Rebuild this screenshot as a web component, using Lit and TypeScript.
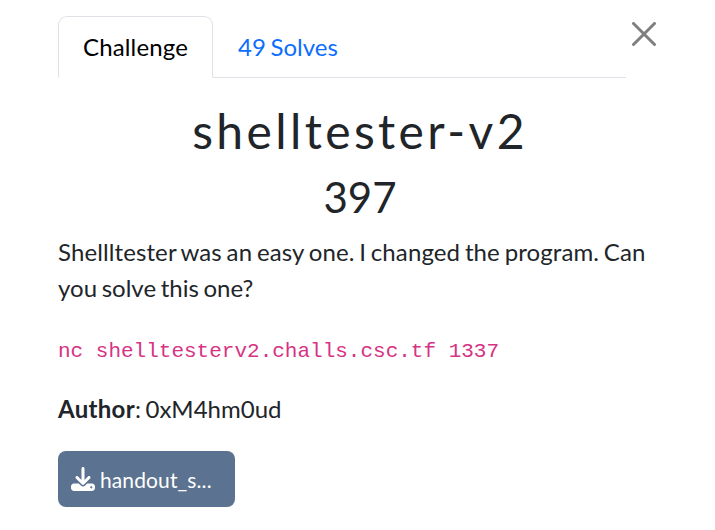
import { LitElement, html, css } from "lit";
import { customElement, property } from "lit/decorators.js";

@customElement("app-root")
export class AppRoot extends LitElement {
  @property() name = "shelltester-v2";
  @property({ type: Number }) value = 397;
  @property({ type: Number }) solves = 49;

  static styles = css`
    :host {
      display: block;
      box-sizing: border-box;
      height: 530px;
      overflow: hidden;
      padding: 16px 53px 0 58px;
      background: #fff;
      color: #212529;
      font: 400 24px/36px Lato, sans-serif;
      letter-spacing: 0.11px;
      word-spacing: -1.5px;
    }
    .head { display: flex; height: 62px; }
    .tabs {
      display: flex;
      flex: 0 0 568px;
      box-sizing: border-box;
      border-bottom: 1px solid #dee2e6;
    }
    .tab {
      box-sizing: border-box;
      height: 62px;
      padding: 12px 24px;
      border: 1px solid transparent;
      color: #0d6efd;
      letter-spacing: 0;
      white-space: nowrap;
    }
    .tab.active {
      color: #000;
      background: #fff;
      border-color: #dee2e6 #dee2e6 #fff;
      border-radius: 9px 9px 0 0;
      letter-spacing: 0.15px;
    }
    .close { display: block; width: 24px; height: 24px; margin: 6px 0 0 6px; flex: none; }
    h2, h3, p { margin: 0; font-weight: 400; }
    h2 {
      margin-top: 24px;
      text-align: center;
      font-size: 48px;
      line-height: 58px;
      letter-spacing: 3.4px;
    }
    h3 { margin-top: 12px; text-align: center; font-size: 42px; line-height: 50px; letter-spacing: 0; }
    .desc { margin-top: 12px; white-space: nowrap; }
    .last { letter-spacing: 0; }
    .row { margin-top: 24px; height: 36px; }
    code {
      font: 21px/36px "Liberation Mono", monospace;
      letter-spacing: 0;
      word-spacing: 0;
      color: #d63384;
    }
    .author { margin-top: 25px; letter-spacing: 0; }
    b { font-weight: 700; letter-spacing: 0.3px; }
    .file {
      display: flex;
      align-items: center;
      box-sizing: border-box;
      width: 177px;
      height: 56px;
      margin-top: 24px;
      padding: 0 13px;
      border-radius: 8px;
      background: #5b7290;
      color: #fff;
      font-size: 21px;
      gap: 5px;
    }
    .file svg { flex: none; width: 24px; height: 24px; }
    .file span { padding-top: 2px; }
  `;

  render() {
    return html`
      <div class="head">
        <div class="tabs">
          <div class="tab active">Challenge</div>
          <div class="tab">${this.solves} Solves</div>
        </div>
        <svg class="close" viewBox="0 0 24 24" fill="none" stroke="#7f7f7f" stroke-width="3" stroke-linecap="round">
          <path d="M1.5 1.5 22.5 22.5M22.5 1.5 1.5 22.5" />
        </svg>
      </div>
      <h2>${this.name}</h2>
      <h3>${this.value}</h3>
      <p class="desc">Shellltester was an easy one. I changed the program. Can<br /><span class="last">you solve this one?</span></p>
      <p class="row"><code>nc shelltesterv2.challs.csc.tf 1337</code></p>
      <p class="author"><b>Author</b>: 0xM4hm0ud</p>
      <div class="file">
        <svg viewBox="0 0 512 512" fill="#fff">
          <path d="M288 32c0-17.700-14.300-32-32-32s-32 14.300-32 32v242.700l-73.400-73.400c-12.500-12.500-32.800-12.500-45.300 0s-12.500 32.800 0 45.300l128 128c12.500 12.500 32.800 12.500 45.300 0l128-128c12.500-12.500 12.500-32.800 0-45.300s-32.800-12.500-45.300 0L288 274.700V32zM64 352c-35.300 0-64 28.700-64 64v32c0 35.300 28.700 64 64 64h384c35.300 0 64-28.700 64-64v-32c0-35.300-28.700-64-64-64H346.500l-45.300 45.300c-25 25-65.500 25-90.500 0L165.500 352H64zm368 56a24 24 0 1 1 0 48 24 24 0 1 1 0-48z" />
        </svg>
        <span>handout_s...</span>
      </div>
    `;
  }
}
